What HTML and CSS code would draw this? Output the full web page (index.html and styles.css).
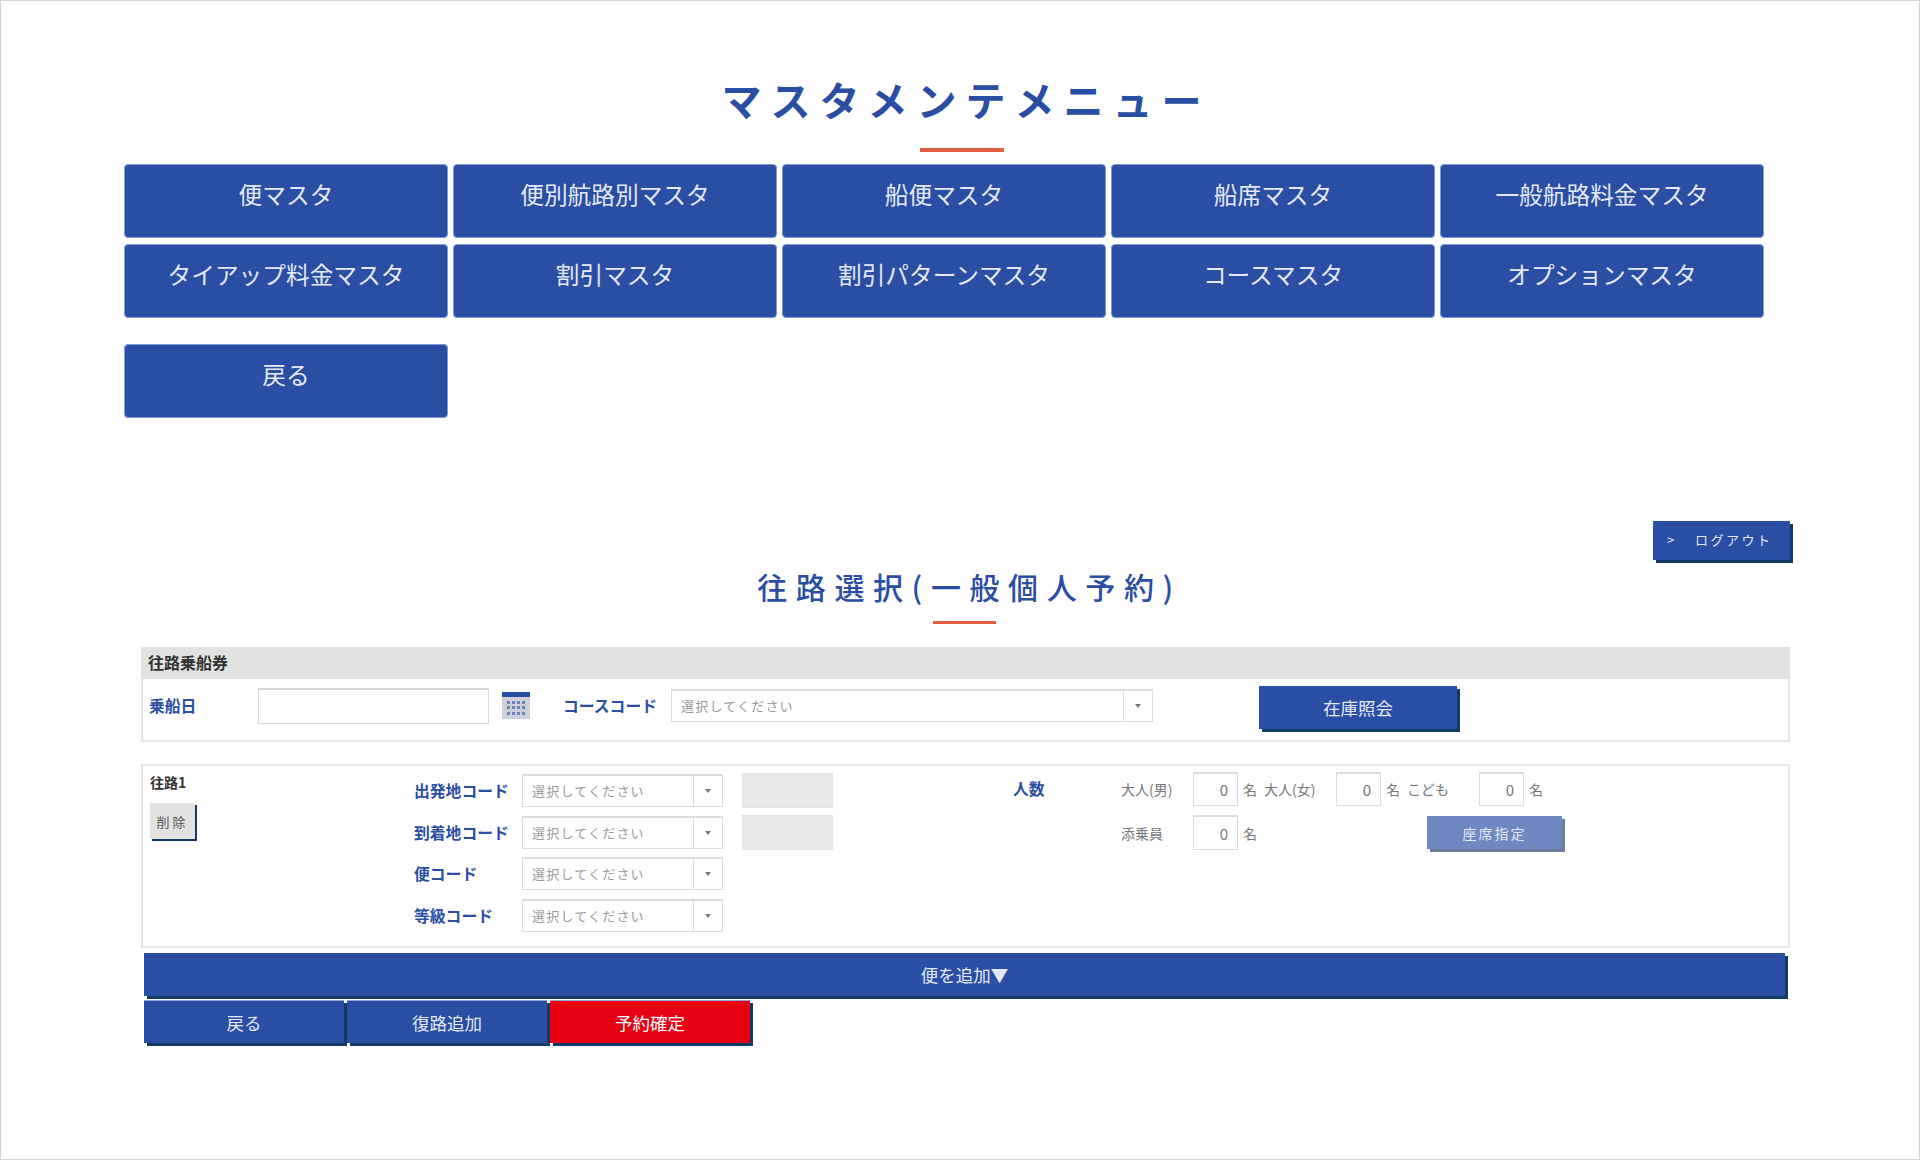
FILE: index.html
```html
<!DOCTYPE html>
<html lang="ja">

<head>
    <meta charset="UTF-8">
    <title>マスタメンテメニュー</title>
    <link rel="stylesheet" href="styles.css">
</head>

<body>
    <section class="menu">
        <h1 class="menu-title">マスタメンテメニュー</h1>
        <div class="menu-line"></div>
        <div class="menu-grid">
            <a class="menu-btn">便マスタ</a>
            <a class="menu-btn">便別航路別マスタ</a>
            <a class="menu-btn">船便マスタ</a>
            <a class="menu-btn">船席マスタ</a>
            <a class="menu-btn">一般航路料金マスタ</a>
            <a class="menu-btn">タイアップ料金マスタ</a>
            <a class="menu-btn">割引マスタ</a>
            <a class="menu-btn">割引パターンマスタ</a>
            <a class="menu-btn">コースマスタ</a>
            <a class="menu-btn">オプションマスタ</a>
        </div>
        <a class="menu-btn menu-back">戻る</a>
    </section>

    <section class="reserve">
        <div class="logout-row">
            <a class="logout"><span class="logout-mark">&gt;</span>ログアウト</a>
        </div>
        <h2 class="reserve-title">往路選択(一般個人予約)</h2>
        <div class="reserve-line"></div>

        <div class="panel">
            <div class="panel-head">往路乗船券</div>
            <div class="ticket-row">
                <label class="label date-label">乗船日</label>
                <input class="date-input" type="text">
                <svg class="calendar" width="28" height="27" viewBox="0 0 28 27">
                    <rect width="28" height="27" fill="#cdd0d8"/>
                    <rect width="28" height="5" fill="#2a4ea3"/>
                    <g fill="#6f83b5">
                        <rect x="5" y="9" width="3" height="3"/><rect x="10" y="9" width="3" height="3"/><rect x="15" y="9" width="3" height="3"/><rect x="20" y="9" width="3" height="3"/>
                        <rect x="5" y="14" width="3" height="3"/><rect x="10" y="14" width="3" height="3"/><rect x="15" y="14" width="3" height="3"/><rect x="20" y="14" width="3" height="3"/>
                        <rect x="5" y="20" width="3" height="3"/><rect x="10" y="20" width="3" height="3"/><rect x="15" y="20" width="3" height="3"/><rect x="20" y="20" width="3" height="3"/>
                    </g>
                </svg>
                <label class="label course-label">コースコード</label>
                <div class="select course-select"><span class="select-text">選択してください</span><span class="select-arrow"></span></div>
                <a class="btn stock-btn">在庫照会</a>
            </div>
        </div>

        <div class="panel route">
            <div class="route-head">
                <div class="route-name">往路1</div>
                <a class="delete-btn">削除</a>
            </div>
            <div class="route-codes">
                <div class="code-row">
                    <label class="label code-label">出発地コード</label>
                    <div class="select"><span class="select-text">選択してください</span><span class="select-arrow"></span></div>
                    <div class="code-name"></div>
                </div>
                <div class="code-row">
                    <label class="label code-label">到着地コード</label>
                    <div class="select"><span class="select-text">選択してください</span><span class="select-arrow"></span></div>
                    <div class="code-name"></div>
                </div>
                <div class="code-row">
                    <label class="label code-label">便コード</label>
                    <div class="select"><span class="select-text">選択してください</span><span class="select-arrow"></span></div>
                </div>
                <div class="code-row">
                    <label class="label code-label">等級コード</label>
                    <div class="select"><span class="select-text">選択してください</span><span class="select-arrow"></span></div>
                </div>
            </div>
            <div class="route-count">
                <label class="label count-label">人数</label>
                <div class="count-rows">
                    <div class="count-row">
                        <span class="count-name">大人(男)</span>
                        <input class="count-input" type="text" value="0"><span class="count-unit">名</span>
                        <span class="count-name">大人(女)</span>
                        <input class="count-input" type="text" value="0"><span class="count-unit">名</span>
                        <span class="count-name">こども</span>
                        <input class="count-input" type="text" value="0"><span class="count-unit">名</span>
                    </div>
                    <div class="count-row count-row-second">
                        <span class="count-name">添乗員</span>
                        <input class="count-input" type="text" value="0"><span class="count-unit">名</span>
                        <a class="btn seat-btn">座席指定</a>
                    </div>
                </div>
            </div>
        </div>

        <a class="btn add-btn">便を追加▼</a>
        <div class="actions">
            <a class="btn action-btn">戻る</a>
            <a class="btn action-btn">復路追加</a>
            <a class="btn action-btn confirm-btn">予約確定</a>
        </div>
    </section>
</body>

</html>
```

FILE: styles.css
```css
* {
    box-sizing: border-box;
}

body {
    margin: 0;
    width: 1920px;
    height: 1160px;
    border: 1px solid #d4d4d4;
    background-color: #fff;
    font-family: "Noto Sans CJK JP", "Noto Sans", sans-serif;
    color: #333;
    overflow: hidden;
}

/* master menu */
.menu {
    padding: 78px 0 0 123px;
}

.menu-title {
    width: 1684px;
    margin: 0;
    font-size: 40px;
    line-height: 40px;
    font-weight: 700;
    letter-spacing: 9px;
    text-align: center;
    color: #2a4ea3;
}

.menu-line {
    width: 84px;
    height: 4px;
    margin: 29px 0 0 796px;
    background-color: #e0603f;
}

.menu-grid {
    display: grid;
    grid-template-columns: repeat(5, 324px);
    grid-auto-rows: 74px;
    gap: 6px 5px;
    margin-top: 12px;
}

.menu-btn {
    display: block;
    height: 74px;
    padding-top: 14px;
    border: 1px solid #7d9ad6;
    border-radius: 4px;
    background-color: #2a4ea3;
    color: #e4e9f5;
    font-size: 23.7px;
    line-height: 30px;
    text-align: center;
}

.menu-back {
    width: 324px;
    margin-top: 26px;
}

/* reservation */
.reserve {
    width: 1649px;
    margin-left: 140px;
}

.logout-row {
    display: flex;
    justify-content: flex-end;
    margin-top: 103px;
}

.logout {
    display: flex;
    align-items: center;
    width: 137px;
    height: 39px;
    padding: 0 0 2px 14px;
    background-color: #2a4ea3;
    box-shadow: 3px 3px 0 #123a66;
    color: #e4e9f5;
    font-size: 13px;
    letter-spacing: 2.5px;
}

.logout-mark {
    width: 28px;
}

.reserve-title {
    margin: 4px 0 0;
    padding-left: 8px;
    font-size: 30px;
    line-height: 44px;
    font-weight: 500;
    letter-spacing: 8.6px;
    text-align: center;
    color: #2a4ea3;
}

.reserve-line {
    width: 63px;
    height: 3px;
    margin: 13px 0 0 792px;
    background-color: #e0603f;
}

.panel {
    border: 2px solid #e6e6e6;
}

.reserve-line + .panel {
    margin-top: 23px;
    border-top: 0;
}

.panel-head {
    height: 32px;
    margin: 0 -2px;
    padding-left: 7px;
    background-color: #e2e2e0;
    font-size: 16px;
    line-height: 30px;
    font-weight: 700;
}

.label {
    font-size: 15.8px;
    font-weight: 700;
    color: #2a4ea3;
}

.ticket-row {
    display: flex;
    align-items: center;
    height: 53px;
    margin-bottom: 8px;
    padding: 0 0 0 6px;
}

.date-label {
    width: 109px;
}

.date-input {
    width: 231px;
    height: 36px;
    border: 1px solid #d8d8d8;
    border-top-width: 2px;
}

.calendar {
    margin-left: 13px;
}

.course-label {
    width: 108px;
    margin-left: 33px;
}

.select {
    display: flex;
    width: 201px;
    height: 33px;
    border: 1px solid #dcdcdc;
    border-top-width: 2px;
    background-color: #fff;
}

.select-text {
    flex: 1;
    padding-left: 9px;
    font-size: 13px;
    line-height: 29px;
    letter-spacing: 1.2px;
    color: #999;
}

.select-arrow {
    position: relative;
    width: 29px;
    border-left: 1px solid #dcdcdc;
}

.select-arrow::after {
    content: "";
    position: absolute;
    top: 13px;
    left: 11px;
    border: 3.5px solid transparent;
    border-top: 4px solid #777;
    border-bottom: 0;
}

.course-select {
    width: 482px;
}

.btn {
    display: flex;
    align-items: center;
    justify-content: center;
    background-color: #2a4ea3;
    box-shadow: 3px 3px 0 #123a66;
    color: #e4e9f5;
    font-size: 17.5px;
}

.stock-btn {
    width: 198px;
    height: 43px;
    margin: 4px 0 0 106px;
}

/* route block */
.route {
    display: flex;
    height: 184px;
    margin-top: 22px;
}

.route-head {
    width: 271px;
    padding: 5px 0 0 7px;
}

.route-name {
    font-size: 14px;
    line-height: 22px;
    font-weight: 700;
}

.delete-btn {
    display: flex;
    align-items: center;
    justify-content: center;
    width: 45px;
    height: 36px;
    margin-top: 10px;
    background-color: #e2e2e0;
    box-shadow: 2px 2px 0 #123a66;
    color: #555;
    font-size: 13px;
    letter-spacing: 3px;
}

.route-codes {
    width: 599px;
    padding-top: 8px;
}

.code-row {
    display: flex;
    align-items: center;
    height: 33px;
    margin-bottom: 8.7px;
}

.code-label {
    width: 108px;
}

.code-name {
    width: 91px;
    height: 35px;
    margin-left: 19px;
    background-color: #e8e8e8;
    border: 1px solid #e2e2e2;
}

.route-count {
    display: flex;
    padding-top: 6px;
}

.count-label {
    width: 108px;
    line-height: 34px;
}

.count-rows {
    display: flex;
    flex-direction: column;
    gap: 9px;
}

.count-row {
    display: flex;
    align-items: center;
    height: 34px;
    font-size: 14px;
    color: #777;
}

.count-row-second {
    height: 35px;
}

.count-name {
    width: 72px;
}

.count-input {
    width: 45px;
    height: 100%;
    padding: 0 9px 0 0;
    border: 1px solid #dcdcdc;
    border-top-width: 2px;
    font-family: inherit;
    font-size: 15px;
    color: #777;
    text-align: right;
}

.count-unit {
    width: 26px;
    padding-left: 5px;
}

.seat-btn {
    width: 135px;
    height: 33px;
    margin-left: 163px;
    background-color: #7088c2;
    box-shadow: 3px 3px 0 #68809c;
    font-size: 14px;
    letter-spacing: 2px;
}

/* bottom buttons */
.add-btn {
    width: 1641px;
    height: 43px;
    margin: 5px 0 0 3px;
}

.actions {
    display: flex;
    gap: 3px;
    margin: 4px 0 0 3px;
}

.action-btn {
    width: 200px;
    height: 43px;
    border: 1px solid #8fa5d8;
    border-width: 1px 0 0 0;
}

.confirm-btn {
    background-color: #e60012;
    color: #fff;
}
```
